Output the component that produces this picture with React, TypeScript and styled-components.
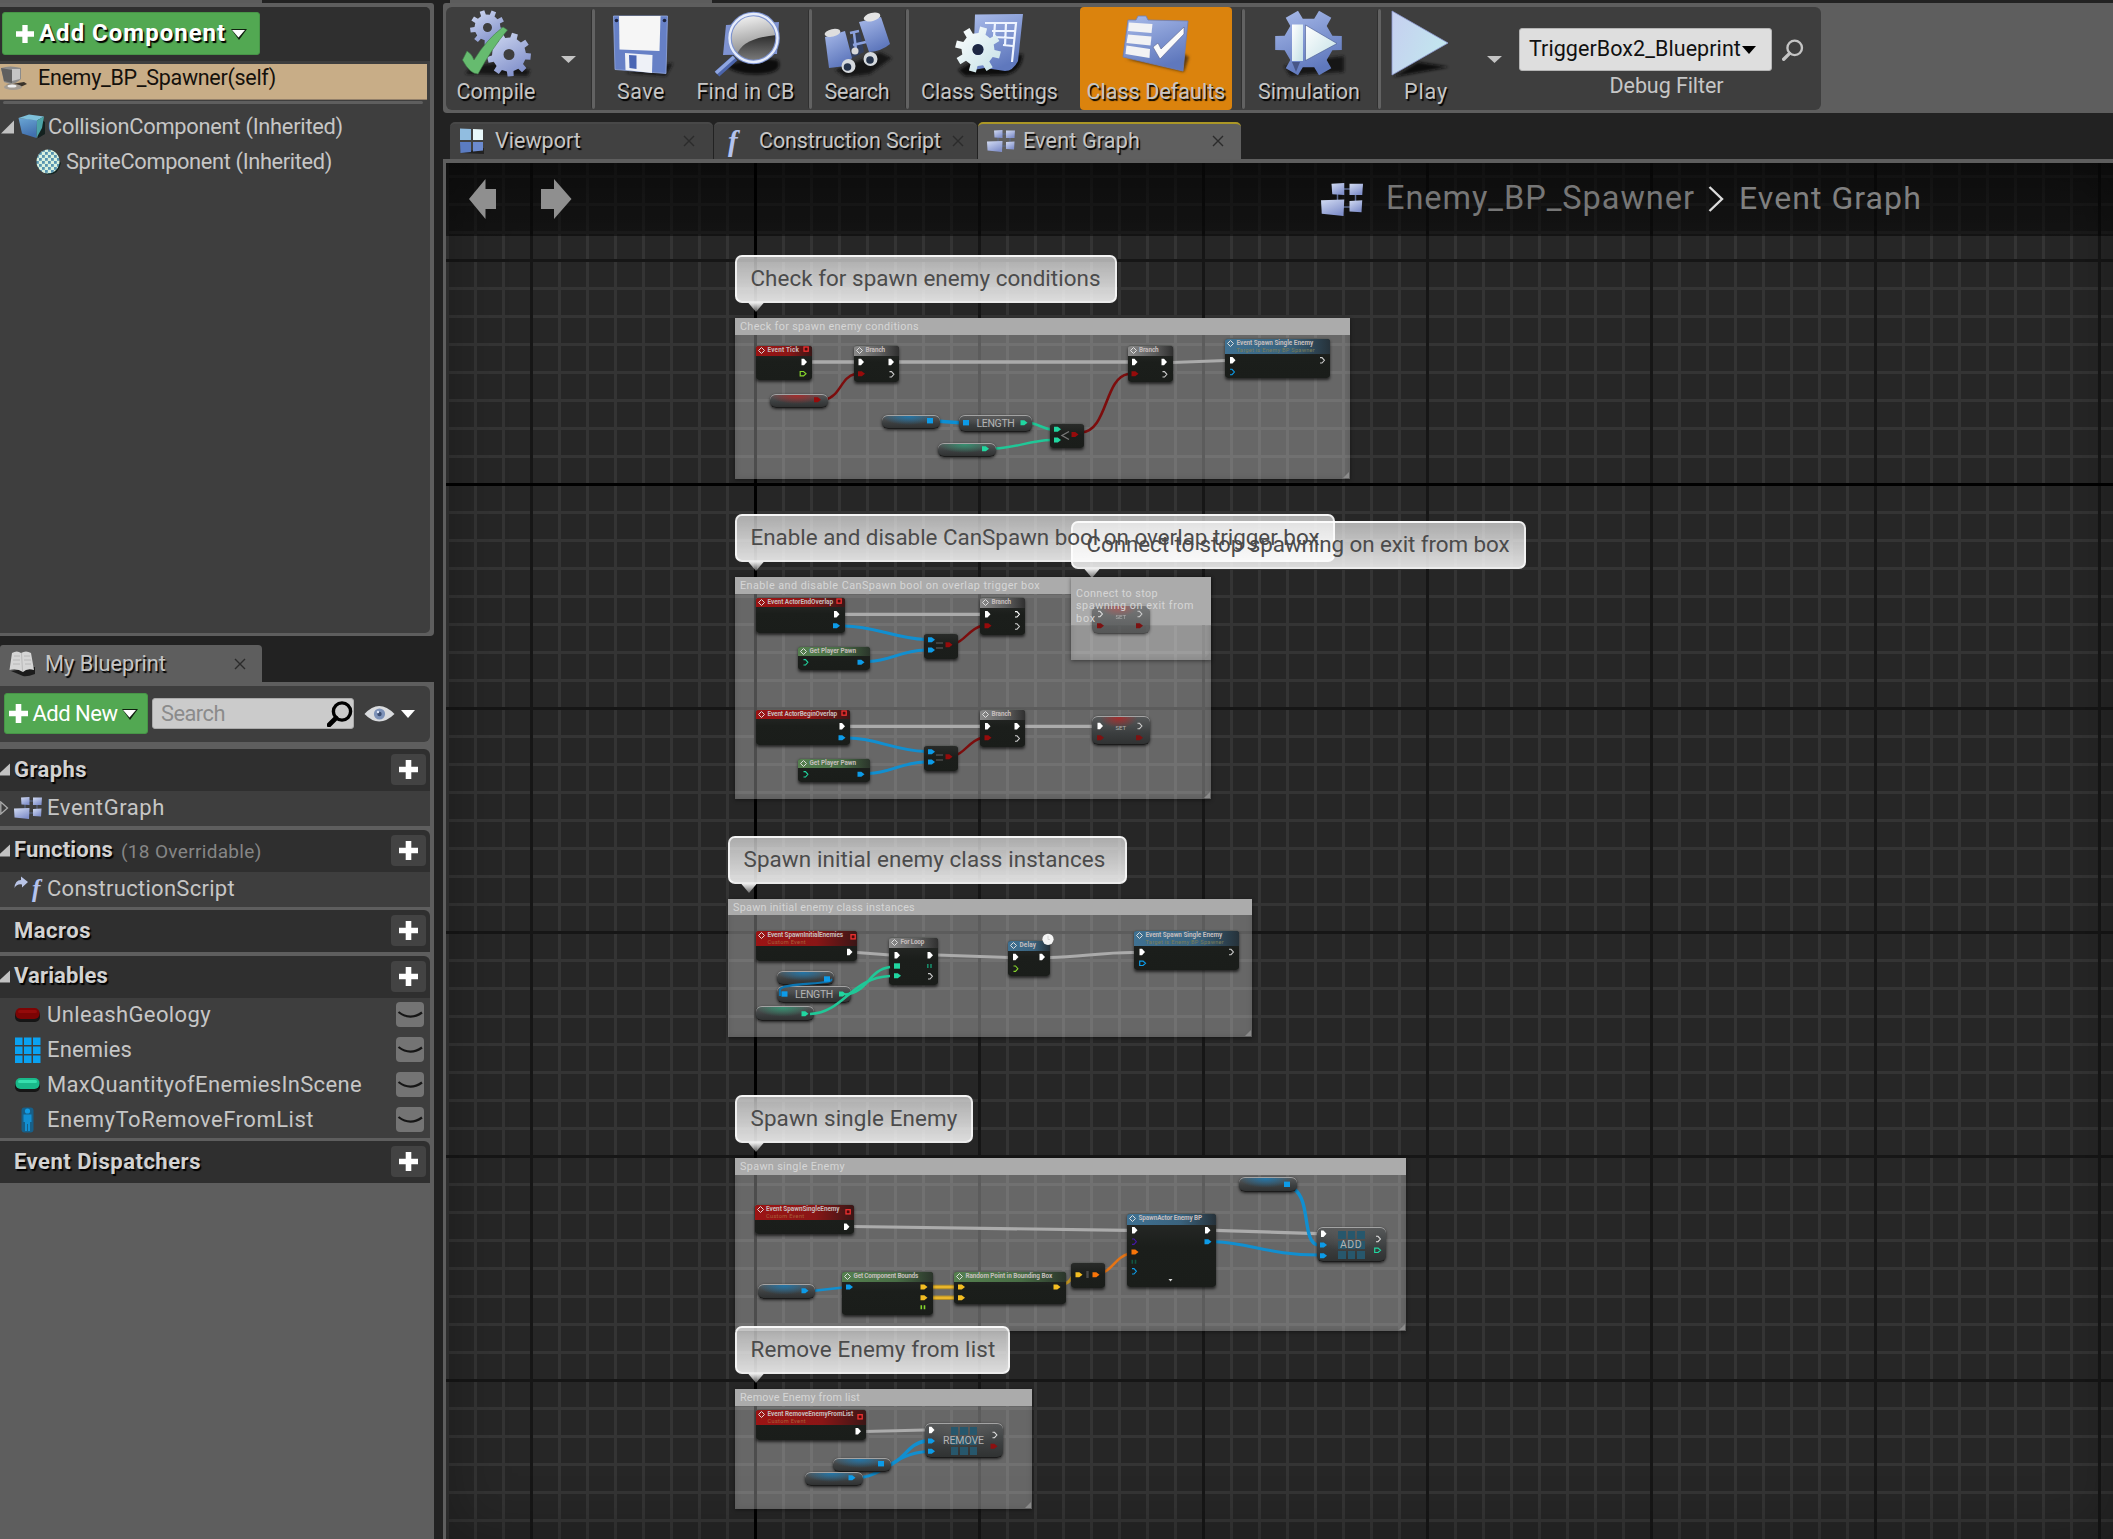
import React, { useLayoutEffect, useRef, useState } from "react";
import styled, { createGlobalStyle, css } from "styled-components";

const Global = createGlobalStyle`
  * { box-sizing: border-box; }
  html, body { margin: 0; padding: 0; background: #222; overflow: hidden; }
  body { font-family: Roboto, "Noto Sans", "Liberation Sans", sans-serif; }
  svg { display: block; flex: none; }
`;

/* ---------- text that is tracked to fill a given width ---------- */

interface TextProps {
  $size: number;
  $color?: string;
  $bold?: boolean;
  $shadow?: boolean;
}

const TextBase = styled.span<TextProps>`
  display: inline-block;
  flex: none;
  white-space: pre;
  line-height: 1.15;
  font-size: ${(p) => p.$size}px;
  font-weight: ${(p) => (p.$bold ? 700 : 400)};
  color: ${(p) => p.$color ?? "#c6c6c6"};
  text-shadow: ${(p) => (p.$shadow ? "1.5px 1.5px 1px #000" : "none")};
`;

interface LabelProps {
  text: string;
  size: number;
  width: number;
  color?: string;
  bold?: boolean;
  shadow?: boolean;
}

function Label({ text, size, width, color, bold, shadow }: LabelProps) {
  const ref = useRef<HTMLSpanElement>(null);
  const [track, setTrack] = useState(0);
  useLayoutEffect(() => {
    if (ref.current) {
      const natural = ref.current.getBoundingClientRect().width - track * text.length;
      setTrack((width + size * 0.09 - natural) / text.length);
    }
  }, [text, width, size]);
  return (
    <TextBase ref={ref} $size={size} $color={color} $bold={bold} $shadow={shadow} style={{ letterSpacing: track }}>
      {text}
    </TextBase>
  );
}

/* ---------- page frame ---------- */

const Page = styled.div`
  width: 2113px;
  height: 1539px;
  display: flex;
  gap: 9px;
  background: #222;
  overflow: hidden;
`;

const Sidebar = styled.div`
  width: 434px;
  flex: none;
  display: flex;
  flex-direction: column;
`;

const Main = styled.div`
  flex: 1;
  min-width: 0;
  display: flex;
  flex-direction: column;
`;

const TabStub = styled.div<{ $ml?: number }>`
  width: 262px;
  height: 3px;
  margin-left: ${(p) => p.$ml ?? 0}px;
  background: #5c5c5c;
  flex: none;
`;

/* ---------- components panel ---------- */

const ComponentsPanel = styled.div`
  height: 633px;
  flex: none;
  padding: 4px 4px 3px 0;
  background: #5e5e5e;
  border-radius: 0 3px 4px 0;
`;

const ComponentsBody = styled.div`
  height: 100%;
  background: #3e3e3e;
  border-radius: 0 5px 5px 0;
  overflow: hidden;
`;

const ComponentsHeader = styled.div`
  height: 54px;
  padding: 5px 0 0 2px;
  background: #2f2f2f;
`;

const GreenButton = styled.div<{ $w: number; $h: number; $gap: number; $pl: number }>`
  width: ${(p) => p.$w}px;
  height: ${(p) => p.$h}px;
  padding-left: ${(p) => p.$pl}px;
  display: flex;
  align-items: center;
  gap: ${(p) => p.$gap}px;
  background: #52a852;
  border: 1px solid #479547;
  border-radius: 3px;
  flex: none;
`;

const SelectedRow = styled.div`
  width: 427px;
  height: 36px;
  margin-top: 3px;
  padding: 0 0 6px;
  display: flex;
  align-items: center;
  gap: 9px;
  background: #c8ad87;
  border-bottom: 1px solid #93806a;
`;

const Divider = styled.div`
  width: 420px;
  height: 3px;
  margin: 1px 0 0 3px;
  background: #5e5e5e;
  border-radius: 2px;
`;

const TreeRow = styled.div<{ $pl: number; $h: number; $gap: number }>`
  height: ${(p) => p.$h}px;
  padding-left: ${(p) => p.$pl}px;
  display: flex;
  align-items: center;
  gap: ${(p) => p.$gap}px;
`;

const Tree = styled.div`
  padding-top: 5px;
`;

/* ---------- my blueprint panel ---------- */

const PanelTab = styled.div`
  width: 262px;
  height: 37px;
  margin-top: 9px;
  padding: 0 16px 0 9px;
  display: flex;
  align-items: center;
  gap: 10px;
  background: #5e5e5e;
  border-radius: 3px 4px 0 0;
  flex: none;
`;

const Spacer = styled.div`
  flex: 1;
`;

const BlueprintPanel = styled.div`
  flex: 1;
  padding: 4px 4px 0 0;
  background: #5e5e5e;
`;

const SearchBar = styled.div`
  height: 56px;
  margin-bottom: 7px;
  padding: 0 0 1px 4px;
  display: flex;
  align-items: center;
  background: #3e3e3e;
  border-radius: 0 6px 6px 0;
`;

const SearchField = styled.div`
  width: 202px;
  height: 31px;
  margin: 0 10px 0 4px;
  padding: 0 0 0 8px;
  display: flex;
  align-items: center;
  justify-content: space-between;
  background: #cbcbcb;
  border: 1px solid #aaa;
  border-radius: 3px;
  flex: none;
`;

const EyeGroup = styled.div`
  display: flex;
  align-items: center;
  gap: 6px;
`;

const Section = styled.section`
  margin-bottom: 3.5px;
`;

const SectionHeader = styled.div`
  height: 42px;
  padding: 0 4px 1px 0;
  display: flex;
  align-items: center;
  background: #2f2f2f;
  border-radius: 0 6px 0 0;
`;

const ArrowSlot = styled.div`
  width: 14px;
  flex: none;
`;

const PlusButton = styled.div`
  width: 35px;
  height: 31px;
  display: flex;
  align-items: center;
  justify-content: center;
  background: #434343;
  border-radius: 4px;
`;

const SubLabel = styled.div`
  margin: 3px 0 0 8px;
`;

const SectionRow = styled.div`
  height: 35px;
  padding: 0 6px 1px 0;
  display: flex;
  align-items: center;
  background: #3e3e3e;
`;

const IconSlot = styled.div`
  width: 33px;
  flex: none;
`;

const EyeToggle = styled.div`
  width: 28px;
  height: 25px;
  display: flex;
  align-items: center;
  justify-content: center;
  background: #747474;
  border-radius: 4px;
`;

/* ---------- toolbar ---------- */

const Toolbar = styled.div`
  height: 110px;
  flex: none;
  padding: 4px 0 4px 3px;
  background: #5e5e5e;
  border-radius: 3px 0 0 4px;
`;

const ToolbarInner = styled.div`
  width: 1375px;
  height: 103px;
  display: flex;
  background: #3e3e3e;
  border-radius: 6px;
`;

const ToolItem = styled.div<{ $w: number; $ml?: number; $active?: boolean }>`
  width: ${(p) => p.$w}px;
  margin-left: ${(p) => p.$ml ?? 0}px;
  padding-top: 2px;
  display: flex;
  flex-direction: column;
  align-items: center;
  gap: 1px;
  flex: none;
  background: ${(p) => (p.$active ? "#db830d" : "transparent")};
  border-radius: 4px;
`;

const ToolSeparator = styled.div<{ $ml?: number }>`
  width: 4px;
  margin: 2px -1px 1px ${(p) => p.$ml ?? 0}px;
  background: #626262;
  border-left: 1px solid #303030;
  border-radius: 2px;
  flex: none;
`;

const DropSlot = styled.div<{ $w: number }>`
  width: ${(p) => p.$w}px;
  padding-top: 49px;
  display: flex;
  justify-content: center;
  flex: none;
`;

const FilterGroup = styled.div`
  width: 295px;
  margin-left: 3px;
  padding-top: 21px;
  display: flex;
  flex-direction: column;
  align-items: center;
  gap: 3px;
  flex: none;
`;

const FilterLine = styled.div`
  width: 100%;
  display: flex;
  align-items: center;
  gap: 10px;
`;

const FilterSelect = styled.div`
  width: 253px;
  height: 43px;
  padding-left: 9px;
  display: flex;
  align-items: center;
  gap: 1px;
  background: #dedede;
  border: 1px solid #b4b4b4;
  border-radius: 3px;
`;

/* ---------- document tabs ---------- */

const Tabs = styled.div`
  height: 37px;
  margin-top: 9px;
  padding-left: 7px;
  display: flex;
  gap: 1px;
  flex: none;
`;

const Tab = styled.div<{ $active?: boolean; $pl: number; $gap: number; $pr: number }>`
  width: 263px;
  padding: 0 ${(p) => p.$pr}px 1px ${(p) => p.$pl}px;
  display: flex;
  align-items: center;
  gap: ${(p) => p.$gap}px;
  background: ${(p) => (p.$active ? "#5f5f5f" : "#414141")};
  border-top: 2px solid ${(p) => (p.$active ? "#ab9726" : "#484848")};
  border-radius: 5px 5px 0 0;
`;

/* ---------- graph canvas ---------- */

const GraphFrame = styled.div`
  flex: 1;
  padding: 4px 0 0 3px;
  background: #5e5e5e;
`;

const OX = 446;
const OY = 163;

const Canvas = styled.div`
  position: relative;
  width: 1667px;
  height: 1376px;
  overflow: hidden;
  background-color: #262626;
  background-image:
    linear-gradient(90deg, #161616 3px, transparent 3px),
    linear-gradient(#161616 3px, transparent 3px),
    linear-gradient(90deg, #343434 3px, transparent 3px),
    linear-gradient(#343434 3px, transparent 3px);
  background-size: 224px 224px, 224px 224px, 28px 28px, 28px 28px;
  background-position: 84px 0, 0 96px, 0 0, 0 12px;
`;

const Vignette = styled.div`
  position: absolute;
  inset: 0;
  box-shadow: inset 0 0 60px rgba(0, 0, 0, 0.28);
`;

const AxisX = styled.div`
  position: absolute;
  left: 0;
  right: 0;
  top: 320px;
  height: 3px;
  background: #000;
`;

const AxisY = styled.div`
  position: absolute;
  top: 0;
  bottom: 0;
  left: 308px;
  width: 3px;
  background: #000;
`;

const GraphHeader = styled.div`
  position: absolute;
  z-index: 3;
  left: 0;
  right: 0;
  top: 0;
  height: 73px;
  padding-bottom: 1px;
  display: flex;
  align-items: center;
  background: linear-gradient(rgba(0, 0, 0, 0.64), rgba(0, 0, 0, 0.5));
`;

const NavArrows = styled.div`
  width: 875px;
  padding: 0 0 1px 22px;
  flex: none;
`;

const Crumbs = styled.div`
  display: flex;
  align-items: center;
`;

const CrumbGap = styled.div<{ $w: number }>`
  width: ${(p) => p.$w}px;
`;

const CrumbRaise = styled.div`
  margin-top: -2px;
`;

interface Box {
  $x: number;
  $y: number;
  $w: number;
  $h: number;
}

const placed = css<Box>`
  position: absolute;
  left: ${(p) => p.$x - OX}px;
  top: ${(p) => p.$y - OY}px;
  width: ${(p) => p.$w}px;
  height: ${(p) => p.$h}px;
`;

const CommentBox = styled.div<Box>`
  ${placed}
  background: rgba(255, 255, 255, 0.3);
  box-shadow: 0 1px 4px rgba(0, 0, 0, 0.45), inset 0 0 6px rgba(0, 0, 0, 0.12);
`;

const CommentTitle = styled.div<{ $h: number; $solid?: boolean }>`
  height: ${(p) => p.$h}px;
  padding: ${(p) => (p.$solid ? "11px 0 0 5px" : "3px 0 0 5px")};
  display: flex;
  flex-direction: column;
  align-items: flex-start;
  background: #ababab;
`;

const CommentLine = styled.div`
  position: relative;
  z-index: 1;
  height: 12.5px;
  line-height: 1;
  display: flex;
`;

const Resize = styled.svg`
  position: absolute;
  right: 1px;
  bottom: 1px;
`;

const Bubble = styled.div<Box>`
  ${placed}
  display: flex;
  align-items: center;
  padding: 0 0 0 13.5px;
  background: linear-gradient(rgba(255, 255, 255, 0.62), rgba(255, 255, 255, 0.84));
  border: 2px solid rgba(255, 255, 255, 0.75);
  border-radius: 7px;
`;

const BubbleText = styled.div`
  position: relative;
  z-index: 2;
`;

const BubbleTail = styled.svg<{ $x: number; $y: number }>`
  position: absolute;
  left: ${(p) => p.$x - OX}px;
  top: ${(p) => p.$y - OY}px;
`;

const NodeBox = styled.div<Box>`
  ${placed}
  overflow: hidden;
  background: linear-gradient(#292b29, #1b1e1b 45%, #1a1d1a);
  border-radius: 3px;
  border-top: 1px solid rgba(190, 190, 190, 0.4);
  box-shadow: 0 2px 3px rgba(0, 0, 0, 0.65);
`;

const headFill = {
  red: "linear-gradient(90deg, #9c1414, #8a1616 60%, #3a1616)",
  grey: "linear-gradient(90deg, #8a8a8a, #5c5c5c 60%, #303030)",
  blue: "linear-gradient(90deg, #3f7192, #3a637e 60%, #26323a)",
  green: "linear-gradient(90deg, #55804f, #486d45 60%, #2b352b)",
};

const NodeHead = styled.div<{ $tone: keyof typeof headFill; $h: number }>`
  height: ${(p) => p.$h}px;
  padding: 1px 0 0 2px;
  display: flex;
  gap: 2.5px;
  background: ${(p) => headFill[p.$tone]};
`;

const NodeTitles = styled.div`
  display: flex;
  flex-direction: column;
  align-items: flex-start;
`;

const pillGlow = { red: "170,40,40", blue: "30,120,175", green: "50,150,115", none: "90,90,90" };

const Pill = styled.div<Box & { $glow: keyof typeof pillGlow; $tall?: boolean; $faded?: boolean }>`
  ${placed}
  display: flex;
  align-items: ${(p) => (p.$tall ? "flex-start" : "center")};
  justify-content: center;
  opacity: ${(p) => (p.$faded ? 0.62 : 1)};
  border-radius: 6px;
  background:
    radial-gradient(ellipse ${(p) => (p.$tall ? "32% 36%" : "46% 70%")} at 46% 4%, rgba(${(p) => pillGlow[p.$glow]}, 0.9), transparent),
    linear-gradient(#565859, #3b3e3f 60%, #303232);
  border-top: 1px solid rgba(225, 225, 225, 0.65);
  border-bottom: 1px solid #1b1b1b;
  box-shadow: 0 1px 3px rgba(0, 0, 0, 0.7);
`;

const PillText = styled.div`
  position: relative;
  line-height: 1;
  padding-bottom: 1.5px;
`;

const Checker = styled.div`
  position: absolute;
  left: 50%;
  top: 3px;
  width: 27px;
  height: 28px;
  margin-left: -13px;
  display: grid;
  grid-template-columns: repeat(3, 1fr);
  gap: 2px;
`;

const CheckerCell = styled.div`
  background: #27576c;
`;

const Layer = styled.svg`
  position: absolute;
  left: 0;
  top: 0;
`;

/* ---------- icons ---------- */

function gear(cx: number, cy: number, ro: number, ri: number, n: number, hole: number, rot = 0) {
  const step = (Math.PI * 2) / n;
  const pt = (a: number, r: number) => `${(cx + Math.cos(a) * r).toFixed(1)} ${(cy + Math.sin(a) * r).toFixed(1)}`;
  let d = "";
  for (let i = 0; i < n; i++) {
    const a = rot + i * step;
    d += `${i ? "L" : "M"}${pt(a - step * 0.28, ri)}L${pt(a - step * 0.2, ro)}L${pt(a + step * 0.2, ro)}L${pt(a + step * 0.28, ri)}`;
  }
  return `${d}ZM${cx - hole} ${cy}a${hole} ${hole} 0 1 0 ${hole * 2} 0a${hole} ${hole} 0 1 0 ${-hole * 2} 0Z`;
}

const HiddenDefs = styled.svg`
  position: absolute;
`;

const Defs = () => (
  <HiddenDefs width="0" height="0">
    <defs>
      <linearGradient id="steel" x1="0" y1="0" x2="0.6" y2="1">
        <stop offset="0" stopColor="#d3dcf3" />
        <stop offset="1" stopColor="#8291cb" />
      </linearGradient>
      <linearGradient id="blue" x1="0" y1="0" x2="0.4" y2="1">
        <stop offset="0" stopColor="#a9bbea" />
        <stop offset="1" stopColor="#5f78bd" />
      </linearGradient>
      <linearGradient id="pale" x1="0" y1="0" x2="1" y2="1">
        <stop offset="0" stopColor="#ffffff" />
        <stop offset="1" stopColor="#c3e0e6" />
      </linearGradient>
      <linearGradient id="play" x1="0" y1="0" x2="1" y2="0.4">
        <stop offset="0" stopColor="#c6cff0" />
        <stop offset="1" stopColor="#c2e6ee" />
      </linearGradient>
      <linearGradient id="lens" x1="0.3" y1="0" x2="0.5" y2="1">
        <stop offset="0" stopColor="#f6f6f6" />
        <stop offset="0.5" stopColor="#b4b4b4" />
        <stop offset="1" stopColor="#777" />
      </linearGradient>
      <linearGradient id="lensDark" x1="0" y1="0" x2="0" y2="1">
        <stop offset="0" stopColor="#2c2c2c" />
        <stop offset="1" stopColor="#7d7d7d" />
      </linearGradient>
      <linearGradient id="tail" x1="0" y1="0" x2="0" y2="1">
        <stop offset="0" stopColor="#f0f0f0" />
        <stop offset="1" stopColor="#f0f0f0" stopOpacity="0.35" />
      </linearGradient>
      <linearGradient id="cube" x1="0" y1="0" x2="0.3" y2="1">
        <stop offset="0" stopColor="#6aa6d4" />
        <stop offset="1" stopColor="#416fae" />
      </linearGradient>
      <pattern id="dots" width="6" height="6" patternUnits="userSpaceOnUse">
        <rect width="6" height="6" fill="#d8f0de" />
        <rect width="2.800" height="2.800" fill="#5593b0" />
        <rect x="3" y="3" width="2.800" height="2.800" fill="#5593b0" />
      </pattern>
      <filter id="soft" x="-30%" y="-30%" width="160%" height="160%">
        <feGaussianBlur stdDeviation="1.6" />
      </filter>
    </defs>
  </HiddenDefs>
);

const CompileIcon = () => (
  <svg width="100" height="70" viewBox="446 9 100 70">
    <path d="M465 74L472 66L500 62L530 70L528 76Z" fill="#151515" filter="url(#soft)" />
    <path d={gear(487.5, 27.5, 17.5, 13, 9, 4.5, 0.2)} fill="url(#steel)" fillRule="evenodd" />
    <path d={gear(509, 54.5, 22, 17, 9, 5.5, 0.1)} fill="url(#steel)" fillRule="evenodd" />
    <path d="M462.500 60L467 51Q472 54 474 60Q486 40 503 27L507.500 30Q492 48 478 74Q470 74 462.500 60Z" fill="#66bb6f" stroke="#3f7a48" strokeWidth="0.6" />
  </svg>
);

const SaveIcon = () => (
  <svg width="94" height="70" viewBox="594 9 94 70">
    <path d="M625 73L673 63L666 76Z" fill="#151515" filter="url(#soft)" />
    <path d="M613.500 16L667.500 16L666 73.500L615 69.500Z" fill="#6680c6" stroke="#93a8e0" strokeWidth="0.8" />
    <path d="M619 16L660.500 16L659.500 51L619.500 49.500Z" fill="#f6f6f6" />
    <path d="M625 53L652.500 55L652 73L625.500 70Z" fill="#eef1f7" />
    <path d="M629 55L636.500 55.500L636.500 69L629.500 68Z" fill="#4a66b4" />
    <circle cx="616.500" cy="20.500" r="1.800" fill="#1d2440" />
    <circle cx="664.500" cy="20.500" r="1.800" fill="#1d2440" />
  </svg>
);

const FindIcon = () => (
  <svg width="115" height="70" viewBox="688 9 115 70">
    <path d="M726 66Q752 55 778 60Q784 72 762 74Q738 76 726 66Z" fill="#111" filter="url(#soft)" />
    <path d="M726 25L779 22L777 54L723 55Z" fill="#7f93d2" />
    <path d="M735 58L717 74" stroke="#4b64aa" strokeWidth="7" />
    <path d="M734 57L716 73" stroke="#8fa6e0" strokeWidth="3.500" />
    <circle cx="753.500" cy="38" r="24" fill="url(#lens)" />
    <path d="M737 55Q742 38 777 35Q779 50 767 58Q752 66 737 55Z" fill="url(#lensDark)" />
    <circle cx="753.500" cy="38" r="24" fill="none" stroke="#7c92cf" strokeWidth="4.600" />
    <circle cx="753.500" cy="38" r="24" fill="none" stroke="#e6ecfb" strokeWidth="2.400" />
  </svg>
);

const SearchIcon = () => (
  <svg width="92" height="70" viewBox="811 9 92 70">
    <path d="M835 70L880 52L892 58L870 74L845 77Z" fill="#161616" filter="url(#soft)" />
    <path d="M849 40L860 32L864 52L852 58Z" fill="#33405f" />
    <path d="M850 33L859 31M853 45L866 42M854 33L856 50" stroke="#8ba1dd" strokeWidth="2.500" />
    <path d="M825 37L845 31L852 58L846 66L829 68Z" fill="url(#blue)" />
    <path d="M859 22L881 17L890 44Q882 51 869 52Z" fill="url(#blue)" />
    <ellipse cx="832.500" cy="33" rx="8" ry="3.800" transform="rotate(-12 832 33)" fill="#dedede" />
    <ellipse cx="872" cy="17" rx="8.500" ry="4" transform="rotate(-14 872 17)" fill="#e4e4e4" />
    <circle cx="855" cy="51" r="3.500" fill="#d8d8d8" />
    <circle cx="848.500" cy="66" r="7" fill="#d6dade" />
    <circle cx="847.500" cy="67" r="3.800" fill="#26344c" />
    <circle cx="870.500" cy="59" r="7" fill="#d6dade" />
    <circle cx="870" cy="60" r="3.800" fill="#26344c" />
  </svg>
);

const SettingsIcon = () => (
  <svg width="163" height="70" viewBox="908 9 163 70">
    <path d="M958 70L975 60L1023 54Q1022 72 1005 75L965 76Z" fill="#111" filter="url(#soft)" />
    <path d="M975 14.500L1023 14L1018 61Q1013 71 1005 71L985 68L973 70Z" fill="url(#blue)" />
    <path d="M985 23L1016 23L1012 62M995 23L994 37M1006 23L1005 46M992 31L1015 31M994 37L1014 38M1003 45L1013 46" stroke="#eef4ff" strokeWidth="2.200" fill="none" />
    <path d={gear(978, 49.5, 23, 16.5, 8, 5.5, 0.25)} fill="url(#pale)" fillRule="evenodd" />
    <circle cx="978" cy="49.500" r="5.500" fill="#1d2742" />
  </svg>
);

const DefaultsIcon = () => (
  <svg width="152" height="70" viewBox="1080 9 152 70">
    <path d="M1126 59L1184 72L1189 57L1184 54Z" fill="#5e3a0b" filter="url(#soft)" />
    <path d="M1128 20L1136 20L1138 16L1146 16L1148 20L1188 21L1183 71L1123 57Z" fill="url(#blue)" stroke="#6d7fb8" strokeWidth="0.8" />
    <path d="M1129 22.500L1152.500 24L1151.500 33L1128 31Z" fill="#f2f2f4" />
    <path d="M1128 34.500L1151.500 36.500L1150.500 45.500L1126.500 43Z" fill="#f2f2f4" />
    <path d="M1126.500 45.500L1150 49L1149.500 58L1125.500 54Z" fill="#f2f2f4" />
    <path d="M1153 47L1158 43L1161 49L1184 27L1184 34L1160 59Z" fill="#fafafa" stroke="#5a628c" strokeWidth="0.6" />
  </svg>
);

const SimulationIcon = () => (
  <svg width="130" height="70" viewBox="1244 9 130 70">
    <path d="M1284 66L1310 60L1344 56L1344 72L1310 74L1290 76Z" fill="#161616" filter="url(#soft)" />
    <path d={gear(1308.5, 43, 34, 25, 6, 0.1, 0)} fill="url(#blue)" />
    <path d="M1292 24.500L1303 24.500L1303 61L1292 61Z" fill="url(#pale)" />
    <path d="M1305.500 25L1337 43.500L1305.500 60.500Z" fill="url(#pale)" stroke="#44588f" strokeWidth="0.6" />
    <path d="M1292 62L1300 62L1296 72Z" fill="#485787" />
  </svg>
);

const PlayIcon = () => (
  <svg width="92" height="70" viewBox="1380 9 92 70">
    <path d="M1393 77L1418 62L1449 67Z" fill="#0e0e0e" filter="url(#soft)" />
    <path d="M1392 11L1448 43L1392 75Z" fill="url(#play)" stroke="#8e9ad2" strokeWidth="0.8" />
  </svg>
);

const Caret = ({ color = "#c4c4c4", w = 15, h = 7 }) => (
  <svg width={w} height={h} viewBox="0 0 15 7" preserveAspectRatio="none">
    <path d="M0 0H15L7.500 7Z" fill={color} />
  </svg>
);

const ButtonCaret = () => (
  <svg width="16" height="12" viewBox="0 0 16 12">
    <path d="M0 1H16L8 12Z" fill="#10200f" />
    <path d="M1 2H14L7.500 9.500Z" fill="#fff" />
  </svg>
);

const Plus = ({ size = 19, t = 5.6 }) => (
  <svg width={size} height={size} viewBox="0 0 19 19">
    <path d={`M${9.5 - t / 2} 0H${9.5 + t / 2}V${9.5 - t / 2}H19V${9.5 + t / 2}H${9.5 + t / 2}V19H${9.5 - t / 2}V${9.5 + t / 2}H0V${9.5 - t / 2}H${9.5 - t / 2}Z`} fill="#fff" />
  </svg>
);

const CloseX = () => (
  <svg width="12" height="12" viewBox="0 0 12 12">
    <path d="M1 1L11 11M11 1L1 11" stroke="#2b2b2b" strokeWidth="1.400" />
  </svg>
);

const Magnifier = ({ size = 26, color = "#000", sw = 3.4 }) => (
  <svg width={size} height={size} viewBox="0 0 26 26">
    <circle cx="15" cy="10.500" r="8.600" fill="none" stroke={color} strokeWidth={sw} />
    <path d="M9 17L2 24" stroke={color} strokeWidth={sw + 1.2} strokeLinecap="round" />
  </svg>
);

const SelfIcon = () => (
  <svg width="29" height="27" viewBox="0 0 29 27">
    <path d="M6 20L24 17L27 19L16 24Z" fill="#3a332b" />
    <path d="M1 3Q10 0 21 3V14Q16 19 10 19L4 17Z" fill="#8b8b8b" />
    <path d="M1 3L12 5V18L4 16Z" fill="#5f5f5f" />
    <path d="M12 4L20 4L20 14L12 16Z" fill="#c4c4c4" />
    <ellipse cx="13" cy="22" rx="9" ry="3" fill="#a29b92" />
    <ellipse cx="12" cy="21" rx="4.500" ry="1.600" fill="#eee" />
  </svg>
);

const CubeIcon = () => (
  <svg width="28" height="26" viewBox="0 0 28 26">
    <path d="M17 26L27 20V8L20 4V24Z" fill="#14211f" />
    <path d="M0.500 4L19 6L18.500 24L4 19.500Z" fill="url(#cube)" />
    <path d="M0.500 4L11 0.500L26 2.500L19 6.500Z" fill="#7fc0da" />
    <path d="M19 6.500L26 2.500L24 14L18.500 24Z" fill="#4ba3a6" />
  </svg>
);

const SpriteIcon = () => (
  <svg width="26" height="26" viewBox="0 0 26 26">
    <path d="M9 25Q22 28 25 14L20 8Z" fill="#142421" />
    <ellipse cx="12" cy="12.500" rx="11.500" ry="12" fill="url(#dots)" />
  </svg>
);

const GraphIcon = ({ w = 28, h = 20 }) => (
  <svg width={w} height={h} viewBox="0 0 28 22" preserveAspectRatio="none">
    <path d="M12 4H22M23 6V16M11 6V12M14 16H20" stroke="#5c6a8f" strokeWidth="1" />
    <path d="M7 0.500L15.500 0L15.500 8L7.500 7.500Z" fill="url(#steel)" />
    <path d="M19 0.500L28 0.500L27.500 8L19 8Z" fill="url(#steel)" />
    <path d="M0 11.500L15.500 11L15 22L0.500 20.500Z" fill="url(#steel)" />
    <path d="M19 12L27.500 11.500L27 19.500L19 19Z" fill="url(#steel)" />
  </svg>
);

const ViewportIcon = () => (
  <svg width="24" height="26" viewBox="0 0 24 26">
    <path d="M1 25L24 26V20Z" fill="#222" />
    <path d="M0 0.500L11 1V12H0Z" fill="#91bde0" />
    <path d="M13 1L23 1.500V12H13Z" fill="#e9f8fa" />
    <path d="M0 14H11V24L0.500 25Z" fill="#5b7cc2" />
    <path d="M13 14H23V22.500L13 23.500Z" fill="#6c8bd0" />
  </svg>
);

const FuncGlyph = styled.span<{ $size: number }>`
  display: inline-block;
  width: 24px;
  padding-left: 4px;
  font-family: "Liberation Serif", "DejaVu Serif", serif;
  font-style: italic;
  font-weight: 700;
  font-size: ${(p) => p.$size}px;
  line-height: 1;
  color: #b3c2ee;
  flex: none;
`;

const ConstructIcon = styled.div`
  display: flex;
  align-items: center;
`;

const ConstructArrow = () => (
  <svg width="14" height="28" viewBox="0 0 14 28">
    <path d="M0.500 13Q1 5 7 5L7 1.500L14 7L8 12.500V9.500Q3 8.500 0.500 13Z" fill="#b9c4e6" />
  </svg>
);

const BookIcon = () => (
  <svg width="26" height="27" viewBox="0 0 26 27">
    <path d="M2 21L26 17V24Q18 27 14 26Z" fill="#1c1c1c" />
    <path d="M3 3Q8 0 12 3Q17 0 22 3L25 20Q18 18 14 22Q8 18 0.500 20Z" fill="#d6d6d6" />
    <path d="M12.500 3L13.500 21M5 6L11 6M4 10L11 10M4 14L11 14M15 6H21M15 10H22M16 14H22" stroke="#b0b0b0" strokeWidth="0.800" />
  </svg>
);

const EyeIcon = () => (
  <svg width="31" height="18" viewBox="0 0 31 18">
    <path d="M0.500 9Q15 -7 30.500 9Q15 24 0.500 9Z" fill="#d9dbde" />
    <circle cx="15.500" cy="9" r="5.600" fill="#7d92b8" />
    <circle cx="15.500" cy="9" r="2.200" fill="#3a4c70" />
    <circle cx="14" cy="7" r="1.200" fill="#dfe8fa" />
  </svg>
);

const ClosedEye = () => (
  <svg width="26" height="12" viewBox="0 0 26 12">
    <path d="M1.500 3Q13 12 25 3.500" fill="none" stroke="#161616" strokeWidth="2.200" />
  </svg>
);

const OpenArrow = ({ size = 14 }) => (
  <svg width={size} height={size} viewBox="0 0 14 14">
    <path d="M0 13.500L13 0.500V13.500Z" fill="#c2c2c2" />
  </svg>
);

const SectionArrow = () => (
  <svg width="11" height="13" viewBox="3 0 11 13">
    <path d="M0 12.500L13 0.500V12.500Z" fill="#c2c2c2" />
  </svg>
);

const ClosedArrow = () => (
  <svg width="9" height="14" viewBox="0 0 9 14">
    <path d="M0.800 1V13L7.500 7Z" fill="none" stroke="#aaa" strokeWidth="1.300" />
  </svg>
);

const BarVar = ({ color, hi }: { color: string; hi: string }) => (
  <svg width="26" height="15" viewBox="0 0 26 15">
    <rect x="1" y="3" width="25" height="12" rx="5" fill="#161616" />
    <rect x="1.500" y="1" width="24" height="11" rx="5" fill={color} />
    <rect x="4" y="3" width="19" height="3" rx="1.500" fill={hi} />
  </svg>
);

const GridVar = () => (
  <svg width="27" height="26" viewBox="-1 0 27 26">
    {[0, 9, 18].map((x) => [0, 9, 18].map((y) => <rect key={`${x}-${y}`} x={x} y={y + 0.5} width="7.500" height="7.500" fill="#0aa2f2" />))}
  </svg>
);

const PersonVar = () => (
  <svg width="26" height="26" viewBox="0 0 26 26">
    <rect x="7.500" y="0.500" width="12" height="25" rx="3" fill="#175f88" />
    <circle cx="13.500" cy="4" r="2.600" fill="#129be4" />
    <path d="M9.500 7.500H17.500V15H16V24H14V17H13V24H11V15H9.500Z" fill="#128fd2" />
  </svg>
);

/* ---------- graph data ---------- */

type PinKind = "exec" | "execOff" | "pin" | "pinOff" | "square" | "small";
interface PinSpec { x: number; y: number; k: PinKind; c?: string }

const RED = "#960b0b";
const BLUE = "#0d9be8";
const GREEN = "#21d6a0";
const LIME = "#86d62c";
const YEL = "#f3bd22";
const ORG = "#f77409";

function Pin({ x, y, k, c = "#fff" }: PinSpec) {
  if (k === "square") return <rect x={x - 3} y={y - 2.7} width="6" height="5.400" fill={c} />;
  if (k === "small") return <path d={`M${x - 2.2} ${y - 2}V${y + 2}M${x + 1} ${y - 2}V${y + 2}`} stroke={c} strokeWidth="1.600" />;
  if (k === "exec") return <path d={`M${x - 2.5} ${y - 3.3}H${x}L${x + 3} ${y}L${x} ${y + 3.3}H${x - 2.5}Z`} fill={c} />;
  if (k === "execOff") return <path d={`M${x - 2} ${y - 2.7}H${x}L${x + 2.4} ${y}L${x} ${y + 2.7}H${x - 2}`} fill="none" stroke={c} strokeWidth="1.100" />;
  if (k === "pinOff") return <path d={`M${x - 2.8} ${y - 2.2}H${x + 0.6}L${x + 3} ${y}L${x + 0.6} ${y + 2.2}H${x - 2.8}Z`} fill="none" stroke={c} strokeWidth="1.200" />;
  return <path d={`M${x - 3} ${y - 2.5}H${x + 0.8}L${x + 4} ${y}L${x + 0.8} ${y + 2.5}H${x - 3}Z`} fill={c} />;
}

interface NodeSpec {
  x: number; y: number; w: number; h: number;
  tone?: keyof typeof headFill; hh?: number;
  title?: string; tw?: number; sub?: string; sw?: number;
}

const nodes: NodeSpec[] = [
  { x: 756, y: 344.5, w: 55.5, h: 35.5, tone: "red", hh: 10, title: "Event Tick", tw: 31 },
  { x: 854, y: 344.5, w: 45, h: 37.5, tone: "grey", hh: 10, title: "Branch", tw: 19 },
  { x: 1127.5, y: 344.5, w: 45, h: 37.5, tone: "grey", hh: 10, title: "Branch", tw: 19 },
  { x: 1050, y: 422.5, w: 33.5, h: 25.5 },
  { x: 1225, y: 337.5, w: 104.5, h: 40.5, tone: "blue", hh: 15.5, title: "Event Spawn Single Enemy", tw: 76, sub: "Target is Enemy BP Spawner", sw: 78 },
  ...[0, 112].flatMap((d): NodeSpec[] => [
    { x: 756, y: 596.5 + d, w: d ? 94 : 89, h: 36, tone: "red", hh: 9.5, title: d ? "Event ActorBeginOverlap" : "Event ActorEndOverlap", tw: d ? 69 : 65 },
    { x: 980, y: 596.5 + d, w: 45, h: 38, tone: "grey", hh: 10, title: "Branch", tw: 19 },
    { x: 798, y: 645.5 + d, w: 71.5, h: 24, tone: "green", hh: 9.5, title: "Get Player Pawn", tw: 46 },
    { x: 924, y: 632.5 + d, w: 33.5, h: 26 },
  ]),
  { x: 756, y: 930, w: 101, h: 30.5, tone: "red", hh: 15, title: "Event SpawnInitialEnemies", tw: 75, sub: "Custom Event", sw: 38 },
  { x: 889, y: 936.5, w: 48.5, h: 48.5, tone: "grey", hh: 10, title: "For Loop", tw: 23 },
  { x: 1008, y: 940, w: 42, h: 35.5, tone: "blue", hh: 10, title: "Delay", tw: 16 },
  { x: 1134, y: 930, w: 105, h: 40, tone: "blue", hh: 15, title: "Event Spawn Single Enemy", tw: 76, sub: "Target is Enemy BP Spawner", sw: 78 },
  { x: 754.5, y: 1204, w: 99, h: 30, tone: "red", hh: 15, title: "Event SpawnSingleEnemy", tw: 73, sub: "Custom Event", sw: 38 },
  { x: 842, y: 1270.5, w: 90.5, h: 44, tone: "green", hh: 10, title: "Get Component Bounds", tw: 64 },
  { x: 954, y: 1270.5, w: 111.5, h: 33, tone: "green", hh: 10, title: "Random Point in Bounding Box", tw: 86 },
  { x: 1070.5, y: 1262, w: 34, h: 26 },
  { x: 1127, y: 1212.5, w: 89, h: 74.5, tone: "blue", hh: 11, title: "SpawnActor Enemy BP", tw: 63 },
  { x: 756, y: 1408.5, w: 110, h: 31, tone: "red", hh: 15, title: "Event RemoveEnemyFromList", tw: 85, sub: "Custom Event", sw: 38 },
];

interface PillSpec { x: number; y: number; w: number; h: number; glow: keyof typeof pillGlow; text?: string; tw?: number; tall?: boolean; faded?: boolean; checker?: boolean }

const pills: PillSpec[] = [
  { x: 770, y: 393.5, w: 57.5, h: 14, glow: "red" },
  { x: 881.5, y: 414.5, w: 58, h: 14, glow: "blue" },
  { x: 959, y: 414.5, w: 73, h: 17, glow: "none", text: "LENGTH", tw: 37 },
  { x: 937.5, y: 442.5, w: 58, h: 14.5, glow: "green" },
  { x: 1092, y: 605, w: 57.5, h: 28.5, glow: "red", text: "SET", tall: true, faded: true },
  { x: 1092, y: 716, w: 57.5, h: 29, glow: "red", text: "SET", tall: true },
  { x: 777, y: 971, w: 57, h: 14, glow: "blue" },
  { x: 777, y: 985.5, w: 74, h: 17, glow: "none", text: "LENGTH", tw: 37 },
  { x: 756, y: 1006, w: 57.5, h: 15, glow: "green" },
  { x: 757.5, y: 1284, w: 57.5, h: 14.5, glow: "blue" },
  { x: 1239, y: 1177, w: 57.5, h: 14.5, glow: "blue" },
  { x: 1316.5, y: 1227, w: 69, h: 34.5, glow: "none", text: "ADD", tw: 21, checker: true },
  { x: 833, y: 1457.5, w: 57.5, h: 14.5, glow: "blue" },
  { x: 804.5, y: 1471.5, w: 58, h: 14.5, glow: "blue" },
  { x: 924.5, y: 1423, w: 78, h: 34.5, glow: "none", text: "REMOVE", tw: 40, checker: true },
];

const pins: PinSpec[] = [
  { x: 804, y: 362, k: "exec" }, { x: 803, y: 373.7, k: "pinOff", c: LIME },
  { x: 861, y: 362, k: "exec" }, { x: 891, y: 362, k: "exec" }, { x: 861, y: 373.7, k: "pin", c: RED }, { x: 891.5, y: 374.3, k: "execOff", c: "#ccc" },
  { x: 817, y: 399.7, k: "pin", c: RED }, { x: 930, y: 420.7, k: "square", c: BLUE },
  { x: 966, y: 422.7, k: "square", c: BLUE }, { x: 1023.5, y: 422.7, k: "pin", c: GREEN }, { x: 985, y: 448.7, k: "pin", c: GREEN },
  { x: 1057, y: 429.3, k: "pin", c: GREEN }, { x: 1057, y: 440, k: "pin", c: GREEN }, { x: 1074.5, y: 434.5, k: "pin", c: RED },
  { x: 1134.5, y: 362, k: "exec" }, { x: 1164, y: 362, k: "exec" }, { x: 1134.5, y: 373.7, k: "pin", c: RED }, { x: 1164.5, y: 374.3, k: "execOff", c: "#ccc" },
  { x: 1232.5, y: 360.3, k: "exec" }, { x: 1322, y: 360.3, k: "execOff", c: "#ccc" }, { x: 1232, y: 372, k: "execOff", c: BLUE },
  ...[0, 112].flatMap((d): PinSpec[] => [
    { x: d ? 842 : 836.5, y: 614.3 + d, k: "exec" }, { x: d ? 841.5 : 836, y: 625.7 + d, k: "pin", c: BLUE },
    { x: 987.5, y: 614.3 + d, k: "exec" }, { x: 1017, y: 614.3 + d, k: d ? "exec" : "execOff" }, { x: 987.5, y: 625.7 + d, k: "pin", c: RED }, { x: 1017, y: 626.5 + d, k: "execOff", c: "#ccc" },
    { x: 805.5, y: 662.3 + d, k: "execOff", c: GREEN }, { x: 860.5, y: 662.3 + d, k: "pin", c: BLUE },
    { x: 931, y: 639.7 + d, k: "pin", c: BLUE }, { x: 931, y: 650 + d, k: "pin", c: BLUE }, { x: 948.5, y: 644.7 + d, k: "pin", c: RED },
    { x: 1100, y: 614 + d, k: d ? "exec" : "execOff", c: d ? "#fff" : "#ddd" }, { x: 1139.5, y: 614 + d, k: "execOff", c: "#ccc" },
    { x: 1100, y: 625.7 + d, k: "pin", c: "#7c1212" }, { x: 1139, y: 625.7 + d, k: "pin", c: "#7c1212" },
  ]),
  { x: 849.5, y: 952, k: "exec" }, { x: 827, y: 979, k: "square", c: BLUE }, { x: 784.5, y: 994, k: "square", c: BLUE },
  { x: 842, y: 994, k: "pin", c: GREEN }, { x: 804.5, y: 1013.7, k: "pin", c: GREEN },
  { x: 897, y: 955.3, k: "exec" }, { x: 930, y: 955.3, k: "exec" }, { x: 897, y: 966, k: "square", c: GREEN }, { x: 930, y: 966, k: "small", c: "#168a68" },
  { x: 897, y: 975.7, k: "pin", c: GREEN }, { x: 930, y: 976.3, k: "execOff", c: "#ccc" },
  { x: 1015.5, y: 957, k: "exec" }, { x: 1042, y: 957, k: "exec" }, { x: 1015.5, y: 968.7, k: "execOff", c: LIME },
  { x: 1142, y: 952, k: "exec" }, { x: 1231, y: 952, k: "execOff", c: "#ccc" }, { x: 1142.5, y: 963.3, k: "pinOff", c: BLUE },
  { x: 846.5, y: 1226.7, k: "exec" }, { x: 804.5, y: 1290.7, k: "pin", c: BLUE }, { x: 849, y: 1287, k: "pin", c: BLUE },
  { x: 923.5, y: 1287, k: "pin", c: YEL }, { x: 923.5, y: 1297.7, k: "pin", c: YEL }, { x: 923.5, y: 1307.3, k: "small", c: LIME },
  { x: 961, y: 1287, k: "pin", c: YEL }, { x: 961, y: 1297.7, k: "pin", c: YEL }, { x: 1056.5, y: 1287, k: "pin", c: YEL },
  { x: 1078.5, y: 1274.7, k: "pin", c: YEL }, { x: 1095.5, y: 1274.7, k: "pin", c: ORG },
  { x: 1134.5, y: 1230.3, k: "exec" }, { x: 1134, y: 1241.7, k: "execOff", c: "#4316a6" }, { x: 1134.5, y: 1252, k: "pin", c: ORG },
  { x: 1134.5, y: 1261.7, k: "small", c: "#125541" }, { x: 1134, y: 1271.3, k: "execOff", c: BLUE },
  { x: 1207.5, y: 1230.3, k: "exec" }, { x: 1207.5, y: 1241.7, k: "pin", c: BLUE }, { x: 1287, y: 1184.3, k: "square", c: BLUE },
  { x: 1323.5, y: 1233.7, k: "exec" }, { x: 1323, y: 1245, k: "pin", c: BLUE }, { x: 1323, y: 1255.7, k: "pin", c: BLUE },
  { x: 1378, y: 1239, k: "execOff", c: "#ddd" }, { x: 1377.5, y: 1250.3, k: "pinOff", c: GREEN },
  { x: 858, y: 1431.3, k: "exec" }, { x: 881, y: 1463.7, k: "square", c: BLUE }, { x: 851.5, y: 1477.7, k: "pin", c: BLUE },
  { x: 931.5, y: 1430, k: "exec" }, { x: 931, y: 1441, k: "pin", c: BLUE }, { x: 931, y: 1451.3, k: "pin", c: BLUE },
  { x: 994.5, y: 1435, k: "execOff", c: "#ddd" }, { x: 993.5, y: 1446.3, k: "pin", c: "#8c1111" },
];

const wires: [string, string, number][] = [
  ["M811 362H854", "#ababab", 3.4], ["M899 362H1128", "#ababab", 3.4], ["M1172 362.500L1226 360.500", "#ababab", 3],
  ["M825 399.500C840 397 841 377 855 374", "#7c0d0d", 2.4],
  ["M939 421.300L960 422.700", "#0c8fd4", 3.4], ["M1031 423C1040 425 1042 428 1051 429.500", "#20c797", 2.6], ["M995 448.500C1015 448 1030 440.500 1051 440", "#20c797", 2.4],
  ["M1081 432.500C1108 431 1104 378 1128 374", "#7c0d0d", 2.6],
  ["M845 614.300H980", "#ababab", 3.2], ["M850 726.300H980", "#ababab", 3.2], ["M1025 726.300H1092", "#ababab", 3.2],
  ...[0, 112].flatMap((d): [string, string, number][] => [
    [`M${d ? 849 : 844} ${626 + d}C875 ${626 + d} 895 ${638.5 + d} 925 ${639.5 + d}`, "#118fd0", 3],
    [`M869 ${661.5 + d}C890 ${661 + d} 900 ${651 + d} 925 ${650 + d}`, "#118fd0", 3],
    [`M956 ${643 + d}C964 ${641 + d} 970 ${629 + d} 981 ${626 + d}`, "#7c0d0d", 2.4],
  ]),
  ["M857 952.500L890 955", "#ababab", 3], ["M937 955L1009 957.500", "#ababab", 3], ["M1050 957.500C1080 957 1105 952 1135 952.500", "#ababab", 3],
  ["M853 1226.500L1128 1230.300", "#ababab", 3.2], ["M1215 1230.300L1318 1233.700", "#ababab", 3.2],
  ["M1215 1241.800C1250 1243 1270 1255 1318 1255", "#118fd0", 3], ["M1294 1189C1311 1200 1302 1243 1318 1245", "#118fd0", 3.4],
  ["M814 1290.800L843 1287.500", "#118fd0", 2.6],
  ["M931 1287H955M931 1297.700H955", "#ae8a26", 4.4], ["M931 1287H955M931 1297.700H955", "#e9b62c", 2.4],
  ["M1064 1284Q1069 1283 1072 1277", "#c99a24", 2.8], ["M1103 1272.500C1112 1270 1116 1257 1128 1254", "#e57415", 2.6],
  ["M865 1431.500L925 1430", "#ababab", 3], ["M888 1466C905 1460 908 1443 926 1441", "#118fd0", 3.4], ["M861 1477.700C885 1474 895 1454 926 1451.500", "#118fd0", 3],
];

const topWires: [string, string, number][] = [
  ["M831 979C836 985 780 982 780 990V996", "#0b74b0", 2.2],
  ["M845 994.500C868 993 868 970 890 967", "#20c797", 2.6], ["M810 1014C845 1012 850 978 890 976", "#20c797", 2.6],
];

interface CommentSpec { x: number; y: number; w: number; h: number; hh: number; lines: [string, number][]; multi?: boolean }

const comments: CommentSpec[] = [
  { x: 735, y: 317.5, w: 615, h: 161.5, hh: 17, lines: [["Check for spawn enemy conditions", 178]] },
  { x: 735, y: 576.5, w: 475.5, h: 222.5, hh: 17, lines: [["Enable and disable CanSpawn bool on overlap trigger box", 299]] },
  { x: 728, y: 898.5, w: 524, h: 138.5, hh: 16.5, lines: [["Spawn initial enemy class instances", 181]] },
  { x: 735, y: 1157.5, w: 671, h: 173, hh: 17, lines: [["Spawn single Enemy", 104]] },
  { x: 735, y: 1388.5, w: 296.5, h: 120, hh: 17, lines: [["Remove Enemy from list", 119]] },
];

const overlay: CommentSpec = {
  x: 1071, y: 577, w: 139.5, h: 82.5, hh: 48, multi: true,
  lines: [["Connect to stop", 81], ["spawning on exit from", 117], ["box", 19]],
};

const bubbles = [
  { x: 735, y: 255, w: 382, tail: 756, text: "Check for spawn enemy conditions", tw: 348 },
  { x: 735, y: 514, w: 600, tail: 756, text: "Enable and disable CanSpawn bool on overlap trigger box", tw: 567 },
  { x: 1071, y: 521, w: 455, tail: 1092, text: "Connect to stop spawning on exit from box", tw: 421 },
  { x: 728, y: 836, w: 399, tail: 749, text: "Spawn initial enemy class instances", tw: 360 },
  { x: 735, y: 1095, w: 238, tail: 756, text: "Spawn single Enemy", tw: 205 },
  { x: 735, y: 1326, w: 275, tail: 756, text: "Remove Enemy from list", tw: 243 },
];

function CommentView({ c }: { c: CommentSpec }) {
  return (
    <CommentBox $x={c.x} $y={c.y} $w={c.w} $h={c.h}>
      <CommentTitle $h={c.hh} $solid={c.multi}>
        {c.lines.map(([t, w]) => (
          <CommentLine key={t}><Label text={t} width={w} size={10.8} color="#d6d6d6" /></CommentLine>
        ))}
      </CommentTitle>
      <Resize width="6" height="6" viewBox="0 0 6 6"><path d="M6 0V6H0Z" fill="#8a8a8a" /></Resize>
    </CommentBox>
  );
}

const VIEW = `${OX} ${OY} 1667 1376`;
const squares: [number, number][] = [[806, 349], [839, 601], [844, 713], [853, 936.7], [848, 1211.7], [860, 1416.7]];

function Graph() {
  return (
    <Canvas>
      <AxisX />
      <AxisY />
      <Vignette />
      {comments.map((c) => <CommentView key={c.y} c={c} />)}
      <CommentView c={overlay} />
      <Layer width="1667" height="1376" viewBox={VIEW}>
        {wires.map(([d, c, w], i) => <path key={i} d={d} stroke={c} strokeWidth={w} fill="none" />)}
      </Layer>
      {nodes.map((n, i) => (
        <NodeBox key={i} $x={n.x} $y={n.y} $w={n.w} $h={n.h}>
          {n.tone && (
            <NodeHead $tone={n.tone} $h={n.hh ?? 10}>
              <svg width="7" height="7" viewBox="0 0 7 7">
                <path d="M3.500 0.500L6.500 3.500L3.500 6.500L0.500 3.500Z" fill="none" stroke="#ddd" strokeWidth="1" />
              </svg>
              <NodeTitles>
                <Label text={n.title ?? ""} size={6.4} width={n.tw ?? 20} color="#c6bebe" bold />
                {n.sub && <Label text={n.sub} size={5.6} width={n.sw ?? 38} color={n.tone === "red" ? "#a8613a" : "#7d7e58"} />}
              </NodeTitles>
            </NodeHead>
          )}
        </NodeBox>
      ))}
      {pills.map((p, i) => (
        <Pill key={i} $x={p.x} $y={p.y} $w={p.w} $h={p.h} $glow={p.glow} $tall={p.tall} $faded={p.faded}>
          {p.checker && <Checker>{Array.from({ length: 9 }, (_, k) => <CheckerCell key={k} />)}</Checker>}
          {p.text && (
            <PillText>
              <Label text={p.text} size={p.tall ? 6 : 10.5} width={p.tw ?? 10} color="#b3b3b3" />
            </PillText>
          )}
        </Pill>
      ))}
      <Layer width="1667" height="1376" viewBox={VIEW}>
        {topWires.map(([d, c, w], i) => <path key={i} d={d} stroke={c} strokeWidth={w} fill="none" />)}
        {squares.map(([x, y]) => <rect key={`${x}-${y}`} x={x - 2} y={y - 2} width="4.200" height="4.200" fill="#4a0a0a" stroke="#f03232" strokeWidth="1.300" />)}
        <path d="M1069 431.500L1062 435.500L1069 439.500" stroke="#777" fill="none" strokeWidth="1.400" />
        <path d="M936 643H943M936 648H943M936 755H943M936 760H943" stroke="#4c4c4c" strokeWidth="1.600" />
        <path d="M1087.500 1271V1278" stroke="#4a4a4a" strokeWidth="2.400" />
        <path d="M1168.500 1279L1170.500 1281.500L1172.500 1279Z" fill="#ddd" />
        {pins.map((p, i) => <Pin key={i} {...p} />)}
        <circle cx="1048" cy="939.300" r="5.600" fill="#f4f4f4" />
        <path d="M1048 935.500V939.500H1050" stroke="#ccc" fill="none" strokeWidth="0.800" />
      </Layer>
      {bubbles.map((b) => (
        <React.Fragment key={b.text}>
          <Bubble $x={b.x} $y={b.y} $w={b.w} $h={48}>
            <BubbleText><Label text={b.text} size={22.4} width={b.tw} color="#4b4b4b" /></BubbleText>
          </Bubble>
          <BubbleTail $x={b.tail - 8} $y={b.y + 47} width="16" height="10" viewBox="0 0 16 10">
            <path d="M0 0.500H16L8 10Z" fill="url(#tail)" />
          </BubbleTail>
        </React.Fragment>
      ))}
      <GraphHeader>
        <NavArrows>
          <svg width="104" height="42" viewBox="469 176 104 42">
            <path d="M470 197L486.500 177V187H497V207H486.500V217Z" fill="#8f8f8f" />
            <path d="M572.500 197L555 177V187H542V207H555V217Z" fill="#8f8f8f" />
          </svg>
        </NavArrows>
        <Crumbs>
          <GraphIcon w={42} h={33} />
          <CrumbGap $w={23} />
          <Label text="Enemy_BP_Spawner" size={32.5} width={306} color="#767676" />
          <CrumbGap $w={13} />
          <svg width="16" height="26" viewBox="0 0 16 26">
            <path d="M1.500 1L14 13L1.500 25" fill="none" stroke="#dcdcdc" strokeWidth="2.400" />
          </svg>
          <CrumbGap $w={15} />
          <CrumbRaise><Label text="Event Graph" size={32} width={180} color="#808080" /></CrumbRaise>
        </Crumbs>
      </GraphHeader>
    </Canvas>
  );
}

/* ---------- sidebar ---------- */

interface RowSpec { icon: React.ReactNode; text: string; w: number; eye?: boolean; arrow?: boolean }
interface SectionSpec { title: string; w: number; open?: boolean; sub?: string; rows?: RowSpec[] }

const sections: SectionSpec[] = [
  { title: "Graphs", w: 71, open: true, rows: [{ icon: <GraphIcon w={28} h={22} />, text: "EventGraph", w: 116, arrow: true }] },
  {
    title: "Functions", w: 97, open: true, sub: "(18 Overridable)",
    rows: [{ icon: <ConstructIcon><ConstructArrow /><FuncGlyph $size={25}>f</FuncGlyph></ConstructIcon>, text: "ConstructionScript", w: 186 }],
  },
  { title: "Macros", w: 75 },
  {
    title: "Variables", w: 92, open: true,
    rows: [
      { icon: <BarVar color="#7c0404" hi="#950a0a" />, text: "UnleashGeology", w: 162, eye: true },
      { icon: <GridVar />, text: "Enemies", w: 83, eye: true },
      { icon: <BarVar color="#19b98a" hi="#36e0ae" />, text: "MaxQuantityofEnemiesInScene", w: 313, eye: true },
      { icon: <PersonVar />, text: "EnemyToRemoveFromList", w: 265, eye: true },
    ],
  },
  { title: "Event Dispatchers", w: 185 },
];

function SidebarView() {
  return (
    <Sidebar>
      <TabStub />
      <ComponentsPanel>
        <ComponentsBody>
          <ComponentsHeader>
            <GreenButton $w={258} $h={43} $gap={5} $pl={13}>
              <Plus size={18} />
              <Label text="Add Component" size={24} width={185} color="#fff" bold shadow />
              <ButtonCaret />
            </GreenButton>
          </ComponentsHeader>
          <SelectedRow>
            <SelfIcon />
            <Label text="Enemy_BP_Spawner(self)" size={21.5} width={236} color="#15110c" />
          </SelectedRow>
          <Divider />
          <Tree>
            <TreeRow $pl={1} $h={35} $gap={2.5}>
              <OpenArrow />
              <CubeIcon />
              <Label text="CollisionComponent (Inherited)" size={21.8} width={293} />
            </TreeRow>
            <TreeRow $pl={36} $h={35} $gap={4}>
              <SpriteIcon />
              <Label text="SpriteComponent (Inherited)" size={21.8} width={264} />
            </TreeRow>
          </Tree>
        </ComponentsBody>
      </ComponentsPanel>
      <PanelTab>
        <BookIcon />
        <Label text="My Blueprint" size={21.8} width={119} shadow />
        <Spacer />
        <CloseX />
      </PanelTab>
      <BlueprintPanel>
        <SearchBar>
          <GreenButton $w={144} $h={41} $gap={4.5} $pl={4}>
            <Plus />
            <Label text="Add New" size={22} width={83} color="#fff" />
            <ButtonCaret />
          </GreenButton>
          <SearchField>
            <Label text="Search" size={21.8} width={62} color="#8b8b8b" />
            <Magnifier />
          </SearchField>
          <EyeGroup>
            <EyeIcon />
            <Caret color="#fff" w={14} h={8} />
          </EyeGroup>
        </SearchBar>
        {sections.map((s) => (
          <Section key={s.title}>
            <SectionHeader>
              <ArrowSlot>{s.open && <SectionArrow />}</ArrowSlot>
              <Label text={s.title} size={22} width={s.w} color="#d2d2d2" bold shadow />
              {s.sub && <SubLabel><Label text={s.sub} size={19} width={139} color="#868686" /></SubLabel>}
              <Spacer />
              <PlusButton><Plus /></PlusButton>
            </SectionHeader>
            {s.rows?.map((r) => (
              <SectionRow key={r.text}>
                <ArrowSlot>{r.arrow && <ClosedArrow />}</ArrowSlot>
                <IconSlot>{r.icon}</IconSlot>
                <Label text={r.text} size={22} width={r.w} />
                <Spacer />
                {r.eye && <EyeToggle><ClosedEye /></EyeToggle>}
              </SectionRow>
            ))}
          </Section>
        ))}
      </BlueprintPanel>
    </Sidebar>
  );
}

const toolLabel = (text: string, width: number) => <Label text={text} size={21.5} width={width} shadow />;

export default function App() {
  return (
    <Page>
      <Global />
      <Defs />
      <SidebarView />
      <Main>
        <TabStub $ml={7} />
        <Toolbar>
          <ToolbarInner>
            <ToolItem $w={100}><CompileIcon />{toolLabel("Compile", 77)}</ToolItem>
            <DropSlot $w={45}><Caret /></DropSlot>
            <ToolSeparator />
            <ToolItem $w={94}><SaveIcon />{toolLabel("Save", 46)}</ToolItem>
            <ToolItem $w={115}><FindIcon />{toolLabel("Find in CB", 96)}</ToolItem>
            <ToolSeparator $ml={5} />
            <ToolItem $w={92}><SearchIcon />{toolLabel("Search", 63)}</ToolItem>
            <ToolSeparator $ml={2} />
            <ToolItem $w={163}><SettingsIcon />{toolLabel("Class Settings", 135)}</ToolItem>
            <ToolItem $w={152} $ml={9} $active><DefaultsIcon />{toolLabel("Class Defaults", 137)}</ToolItem>
            <ToolSeparator $ml={9} />
            <ToolItem $w={130}><SimulationIcon />{toolLabel("Simulation", 100)}</ToolItem>
            <ToolSeparator $ml={3} />
            <ToolItem $w={92}><PlayIcon />{toolLabel("Play", 42)}</ToolItem>
            <DropSlot $w={44}><Caret /></DropSlot>
            <FilterGroup>
              <FilterLine>
                <FilterSelect>
                  <Label text="TriggerBox2_Blueprint" size={21.5} width={210} color="#111" />
                  <Caret color="#000" w={14} h={8} />
                </FilterSelect>
                <Magnifier size={22} color="#c4c4c4" sw={2.8} />
              </FilterLine>
              <Label text="Debug Filter" size={21.5} width={112} />
            </FilterGroup>
          </ToolbarInner>
        </Toolbar>
        <Tabs>
          <Tab $pl={10} $gap={11} $pr={18}><ViewportIcon /><Label text="Viewport" size={21.5} width={84} shadow /><Spacer /><CloseX /></Tab>
          <Tab $pl={10} $gap={11} $pr={10 + 7}><FuncGlyph $size={29}>f</FuncGlyph><Label text="Construction Script" size={21.5} width={180} shadow /><CloseX /></Tab>
          <Tab $pl={9} $gap={8} $pr={17} $active><GraphIcon w={28} h={22} /><Label text="Event Graph" size={21.5} width={115} shadow /><Spacer /><CloseX /></Tab>
        </Tabs>
        <GraphFrame>
          <Graph />
        </GraphFrame>
      </Main>
    </Page>
  );
}
